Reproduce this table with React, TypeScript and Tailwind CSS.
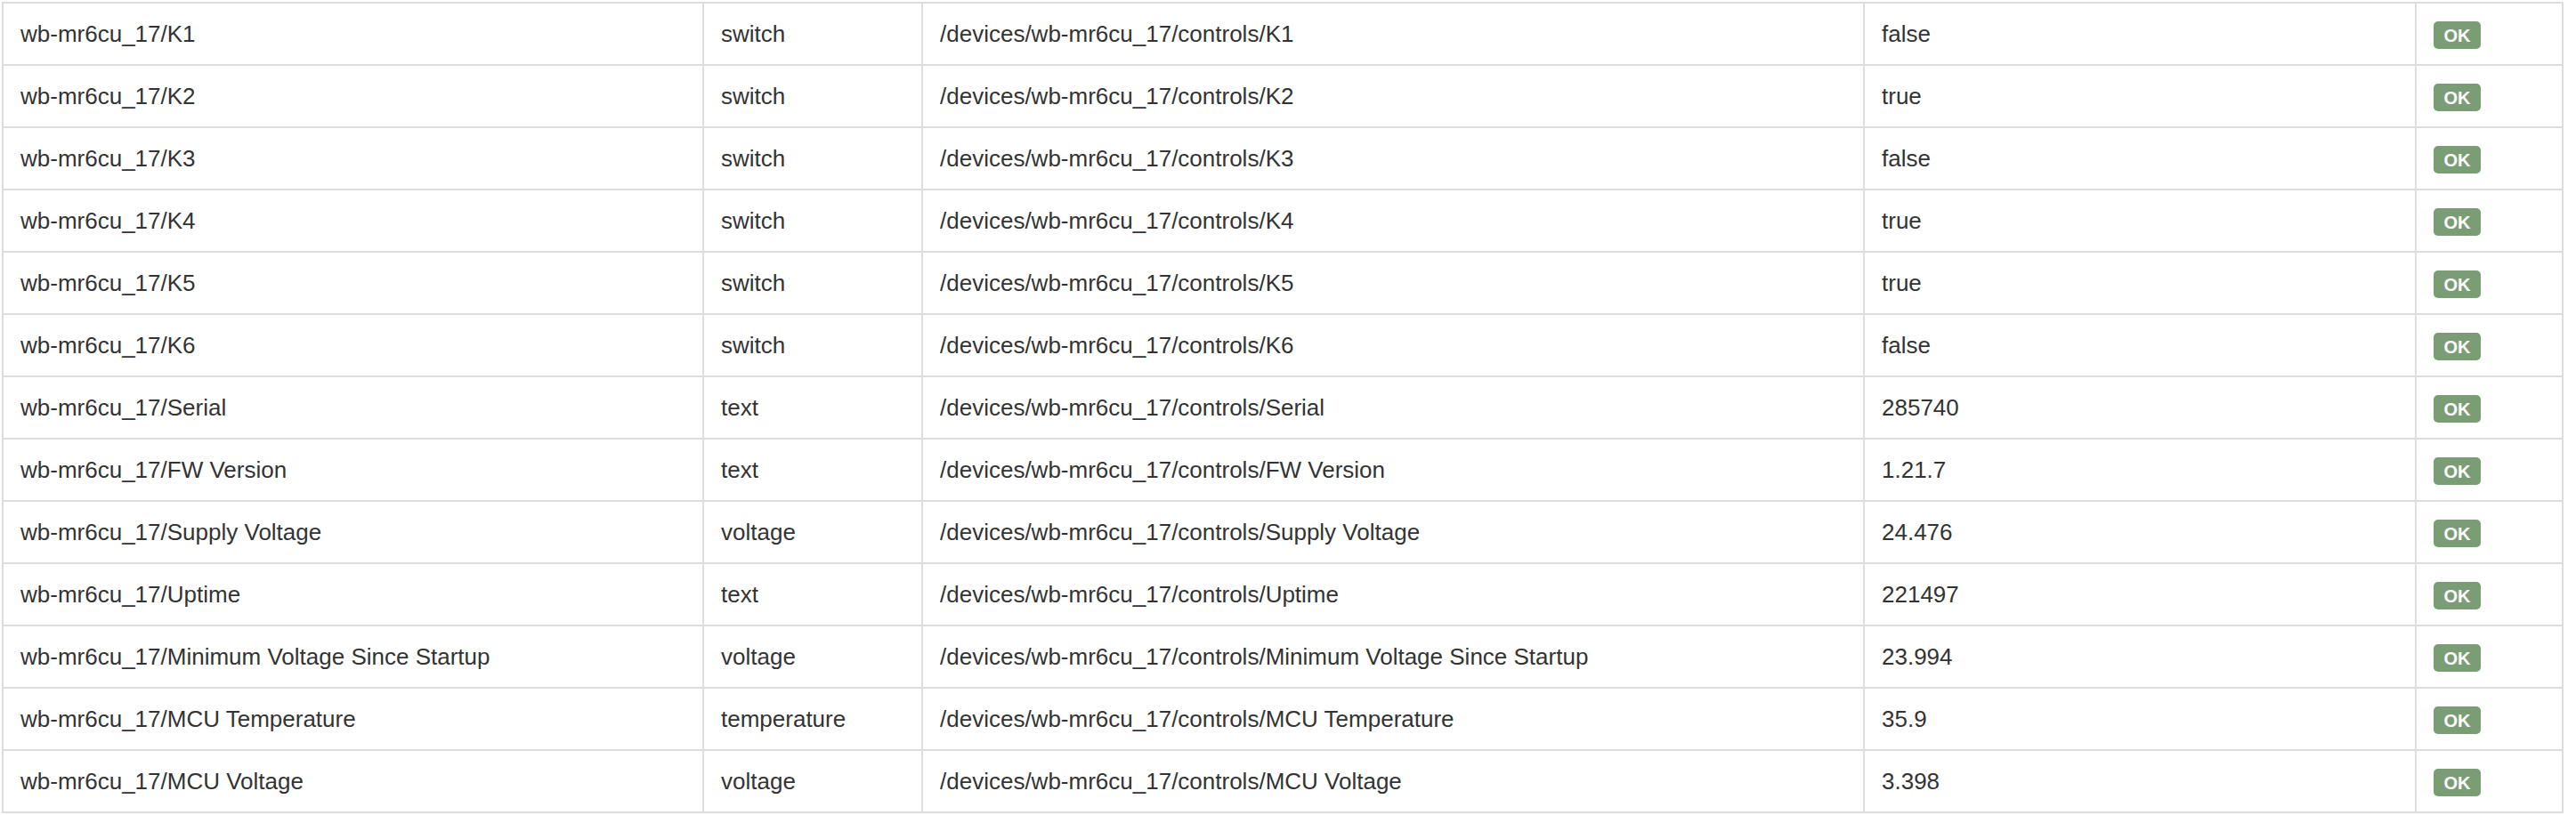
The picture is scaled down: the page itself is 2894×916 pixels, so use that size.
import React from 'react';

type Row = {
  name: string;
  type: string;
  value: string;
};

const rows: Row[] = [
  { name: 'K1', type: 'switch', value: 'false' },
  { name: 'K2', type: 'switch', value: 'true' },
  { name: 'K3', type: 'switch', value: 'false' },
  { name: 'K4', type: 'switch', value: 'true' },
  { name: 'K5', type: 'switch', value: 'true' },
  { name: 'K6', type: 'switch', value: 'false' },
  { name: 'Serial', type: 'text', value: '285740' },
  { name: 'FW Version', type: 'text', value: '1.21.7' },
  { name: 'Supply Voltage', type: 'voltage', value: '24.476' },
  { name: 'Uptime', type: 'text', value: '221497' },
  { name: 'Minimum Voltage Since Startup', type: 'voltage', value: '23.994' },
  { name: 'MCU Temperature', type: 'temperature', value: '35.9' },
  { name: 'MCU Voltage', type: 'voltage', value: '3.398' },
];

const DEVICE = 'wb-mr6cu_17';

const cell = 'flex items-center h-[70px] pl-[19px] border-r-2 border-b-2 border-[#dddddd] whitespace-nowrap overflow-hidden';

const App: React.FC = () => {
  return (
    <div className="w-[2894px] h-[916px] bg-white pt-[2px] pl-[2px] font-['Liberation_Sans',Arial,sans-serif] text-[26px] text-[#333333]">
      <div className="grid grid-cols-[787px_246px_1058px_620px_165px] border-l-2 border-t-2 border-[#dddddd] w-[2878px]">
        {rows.map((r) => (
          <React.Fragment key={r.name}>
            <div className={cell}>{DEVICE}/{r.name}</div>
            <div className={cell}>{r.type}</div>
            <div className={cell}>/devices/{DEVICE}/controls/{r.name}</div>
            <div className={cell}>{r.value}</div>
            <div className={cell}>
              {/* status label */}
              <span className="inline-flex items-center justify-center mt-[3px] w-[53px] h-[31px] rounded-[5px] bg-[#7a9d76] text-white font-bold text-[20px] leading-none">
                OK
              </span>
            </div>
          </React.Fragment>
        ))}
      </div>
    </div>
  );
};

export default App;
